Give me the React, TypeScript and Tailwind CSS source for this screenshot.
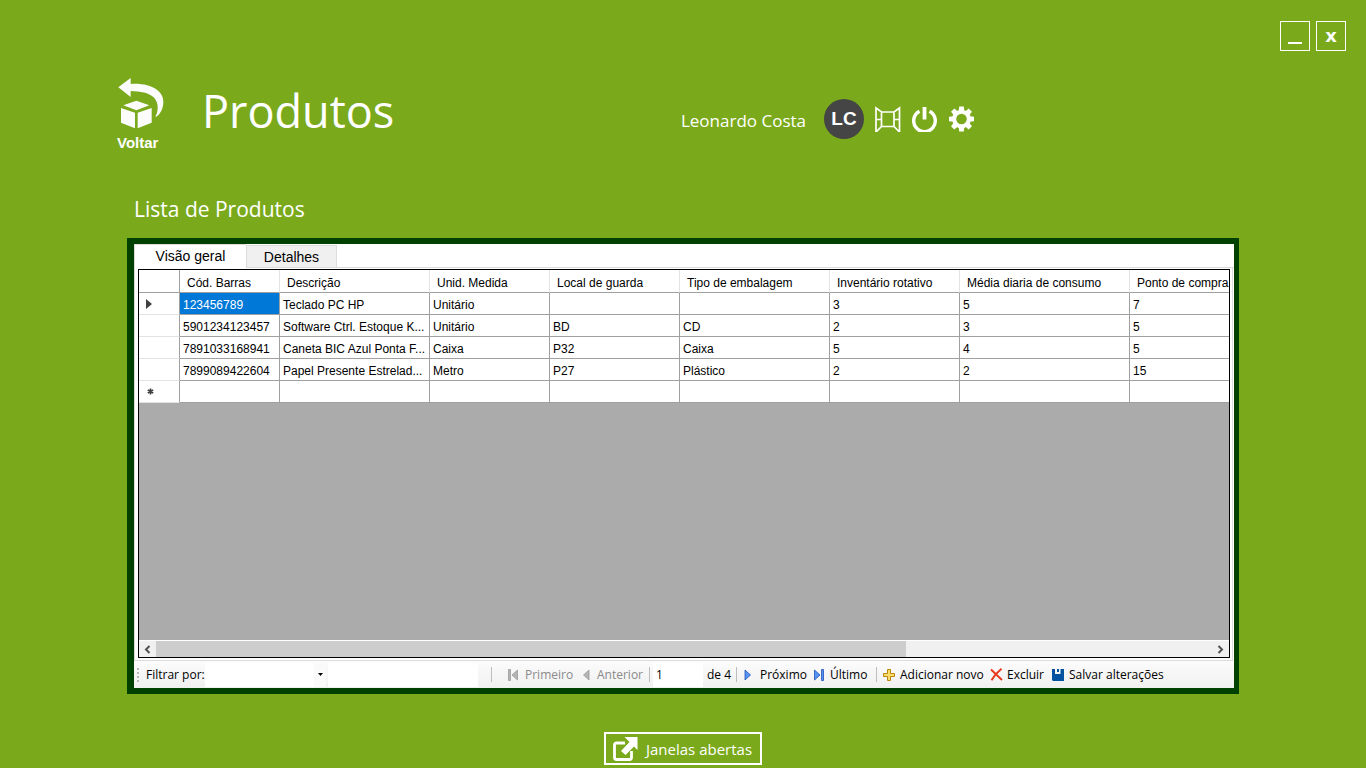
import React from "react";

const segoe = "font-['Open_Sans','Noto_Sans',sans-serif]";
const sans = "font-['Liberation_Sans',Arial,sans-serif]";

const columns = [
  { title: "Cód. Barras", width: "w-[100px]" },
  { title: "Descrição", width: "w-[150px]" },
  { title: "Unid. Medida", width: "w-[120px]" },
  { title: "Local de guarda", width: "w-[130px]" },
  { title: "Tipo de embalagem", width: "w-[150px]" },
  { title: "Inventário rotativo", width: "w-[130px]" },
  { title: "Média diaria de consumo", width: "w-[170px]" },
  { title: "Ponto de compra", width: "w-[130px]" },
];

const rows = [
  ["123456789", "Teclado PC HP", "Unitário", "", "", "3", "5", "7"],
  ["5901234123457", "Software Ctrl. Estoque K...", "Unitário", "BD", "CD", "2", "3", "5"],
  ["7891033168941", "Caneta BIC Azul Ponta F...", "Caixa", "P32", "Caixa", "5", "4", "5"],
  ["7899089422604", "Papel Presente Estrelad...", "Metro", "P27", "Plástico", "2", "2", "15"],
  ["", "", "", "", "", "", "", ""],
];

function BackIcon() {
  return (
    <svg viewBox="51 36 144 156" className="h-[52px] w-12 fill-[#fcfcfc]" aria-hidden="true">
      <path d="M55 67 92 39V57C155 53 192 80 190 112C189 136 178 150 168 156C165 154 168 152 170 147C176 128 174 111 161 97C146 83 122 79 92 78V96Z" />
      <path d="M109 107 148 121 109 136 70 121Z" />
      <path d="M63 129 105 143V190L63 173Z" />
      <path d="M155 129 113 143V190L155 173Z" />
    </svg>
  );
}

function WindowIcon() {
  return (
    <svg viewBox="0 0 26 26" className="size-[26px] fill-none stroke-white" strokeWidth="1.7" aria-hidden="true">
      <path d="M1 2V26L6.500 20.500H19L24.500 26V2L19 6H6.500ZM6.500 6V20.500M19 6V20.500M1 13.500H6.500M19 13.500H24.500" />
    </svg>
  );
}

function PowerIcon() {
  return (
    <svg viewBox="0 0 26 26" className="size-[26px] fill-none stroke-white" strokeWidth="3.4" aria-hidden="true">
      <path d="M7.500 5.300A10.800 10.800 0 1 0 17.500 5.300" />
      <path d="M12.500 1V13.500" strokeWidth="3.800" />
    </svg>
  );
}

function GearIcon() {
  return (
    <svg viewBox="0 0 26 26" className="size-[26px]" aria-hidden="true">
      <circle cx="12.500" cy="13" r="7.300" fill="none" stroke="#fff" strokeWidth="4" />
      <g className="fill-white">
        {[0, 45, 90, 135, 180, 225, 270, 315].map((a) => (
          <path key={a} d="M9.700 5.500 10.200 .5H14.800L15.300 5.500Z" transform={`rotate(${a} 12.5 13)`} />
        ))}
      </g>
    </svg>
  );
}

function OpenIcon() {
  return (
    <svg viewBox="0 0 26 26" className="size-[26px] shrink-0" aria-hidden="true">
      <path d="M13 7H4.500Q2.500 7 2.500 9V21.500Q2.500 23.500 4.500 23.500H17.500Q19.500 23.500 19.500 21.500V15" fill="none" stroke="#fff" strokeWidth="2.800" />
      <path d="M12.500 1H25.500V14L22 10.500 13.500 19 9 15 17.500 6Z" className="fill-white" />
    </svg>
  );
}

function NavIcon({ back, bar, off }: { back?: boolean; bar?: boolean; off?: boolean }) {
  return (
    <svg viewBox="0 0 12 12" className="size-3 shrink-0" aria-hidden="true">
      <g
        transform={back ? "translate(12 0) scale(-1 1)" : undefined}
        className={off ? "fill-[#b4b4b4] stroke-[#9a9a9a]" : "fill-[#5794f2] stroke-[#1f50b8]"}
        strokeWidth="0.8"
      >
        <path d={bar ? "M1.5 1V11L7 6Z" : "M3 1V11L8.500 6Z"} />
        {bar && <path d="M8.500 0.500H10.500V11.500H8.500Z" />}
      </g>
    </svg>
  );
}

function PlusIcon() {
  return (
    <svg viewBox="0 0 12 12" className="size-3 shrink-0" aria-hidden="true">
      <path d="M4.500 .5H7.500V4.500H11.500V7.500H7.500V11.500H4.500V7.500H.5V4.500H4.500Z" fill="#fbdc6b" stroke="#b8860b" />
    </svg>
  );
}

function DeleteIcon() {
  return (
    <svg viewBox="0 0 13 13" className="size-[13px] shrink-0" aria-hidden="true">
      <path d="M1 1.500 12 12M11.500 .7Q5 6 1.500 12.300" fill="none" stroke="#e8391d" strokeWidth="1.900" />
    </svg>
  );
}

function SaveIcon() {
  return (
    <svg viewBox="0 0 12 12" className="size-3 shrink-0" aria-hidden="true">
      <path d="M0 0H3V5H10V0H12V12H1L0 11Z" fill="#0552a0" />
      <path d="M5 0H7V3H5Z" fill="#0552a0" />
      <path d="M8.500 0H10V5H8.500Z" fill="#0552a0" />
    </svg>
  );
}

function Separator() {
  return <span className="h-[15px] w-px shrink-0 bg-[#bdbdbd]" />;
}

function ToolButton({
  icon, label, width, gap = "gap-[5px]", off,
}: { icon: React.ReactNode; label: string; width: string; gap?: string; off?: boolean }) {
  return (
    <button
      type="button"
      disabled={off}
      className={`flex h-full shrink-0 items-center whitespace-nowrap ${gap} ${width} ${off ? "text-[#8a8a8a]" : ""}`}
    >
      {icon}
      {label}
    </button>
  );
}

function ProductGrid() {
  return (
    <div className="flex min-h-0 flex-1 flex-col border border-black bg-[#ababab]">
      <div className="min-h-0 flex-1 overflow-hidden">
        <table className="w-max table-fixed border-separate border-spacing-0 text-[12px] leading-4 text-black">
          <thead>
            <tr className="h-[23px] bg-white">
              <th className="w-[41px] border-r border-b border-[#a0a0a0] p-0" aria-label="Linha" />
              {columns.map((c) => (
                <th
                  key={c.title}
                  className={`${c.width} border-r border-b border-r-[#e3e3e3] border-b-[#a0a0a0] pt-1 pr-0 pb-0 pl-[7px] text-left font-normal whitespace-nowrap`}
                >
                  {c.title}
                </th>
              ))}
            </tr>
          </thead>
          <tbody>
            {rows.map((row, r) => (
              <tr key={r} className="h-[22px] bg-white">
                <th className="border-r border-b border-r-[#a0a0a0] border-b-[#e3e3e3] p-0">
                  {r === 0 && (
                    <svg viewBox="0 0 6 10" className="ml-[7px] h-[10px] w-[6px]" aria-hidden="true">
                      <path d="M0 0V10L6 5Z" fill="#404040" />
                    </svg>
                  )}
                  {r === 4 && (
                    <svg viewBox="0 0 7 7" className="ml-2 size-[7px]" aria-hidden="true">
                      <path d="M3.500 .5V6.500M.8 2 6.200 5M6.200 2 .8 5" stroke="#404040" strokeWidth="1.700" />
                    </svg>
                  )}
                </th>
                {row.map((value, c) => (
                  <td
                    key={c}
                    className={`overflow-hidden border-r border-b border-[#a0a0a0] pt-[2px] pr-0 pb-0 pl-[3px] whitespace-nowrap ${r === 0 && c === 0 ? "bg-[#0078d7] text-white" : ""}`}
                  >
                    {value}
                  </td>
                ))}
              </tr>
            ))}
          </tbody>
        </table>
      </div>
      <div className="flex h-[17px] shrink-0 border-t border-white bg-[#f0f0f0]">
        <button type="button" aria-label="Rolar para a esquerda" className="flex w-[17px] items-center justify-center">
          <svg viewBox="0 0 7 9" className="h-[9px] w-[7px] fill-none stroke-[#505050] stroke-2"><path d="M5.500 1 2 4.500 5.500 8" /></svg>
        </button>
        <div className="flex-1"><div className="h-full w-[71%] bg-[#cdcdcd]" /></div>
        <button type="button" aria-label="Rolar para a direita" className="flex w-[17px] items-center justify-center">
          <svg viewBox="0 0 7 9" className="h-[9px] w-[7px] fill-none stroke-[#505050] stroke-2"><path d="M1.500 1 5 4.500 1.500 8" /></svg>
        </button>
      </div>
    </div>
  );
}

function Toolbar() {
  return (
    <div className={`flex h-[27px] shrink-0 items-center overflow-hidden bg-linear-to-b from-[#fcfcfc] to-[#f0f0f0] text-[12px] leading-4 text-black ${segoe}`}>
      <span className="ml-[3px] flex w-[9px] shrink-0 flex-col gap-[2px]">
        {[0, 1, 2, 3].map((i) => <i key={i} className="size-[2px] bg-[#b8b8b8]" />)}
      </span>
      <label htmlFor="filter" className="w-[59px] shrink-0 whitespace-nowrap">Filtrar por:</label>
      <div className="relative mr-[2px] h-6 w-[121px] shrink-0">
        <select id="filter" className="size-full appearance-none bg-white"><option value="" /></select>
        <span className="pointer-events-none absolute inset-y-0 right-0 flex w-3 items-center justify-center bg-[#fafafa]">
          <svg viewBox="0 0 5 3" className="h-[3px] w-[5px]"><path d="M0 0H5L2.500 3Z" /></svg>
        </span>
      </div>
      <input aria-label="Texto do filtro" className="mr-[13px] h-6 w-[150px] shrink-0 bg-white" />
      <Separator />
      <span className="w-[15px] shrink-0" />
      <ToolButton icon={<NavIcon back bar off />} label="Primeiro" width="w-[73px]" gap="gap-[6px]" off />
      <ToolButton icon={<NavIcon back off />} label="Anterior" width="w-[69px]" off />
      <Separator />
      <input aria-label="Posição atual" defaultValue="1" className="ml-[3px] h-6 w-[50px] shrink-0 bg-white pl-[3px]" />
      <span className="w-[33px] shrink-0 pl-1">de 4</span>
      <Separator />
      <span className="w-[5px] shrink-0" />
      <ToolButton icon={<NavIcon />} label="Próximo" width="w-[71px]" gap="gap-[6px]" />
      <ToolButton icon={<NavIcon bar />} label="Último" width="w-[63px]" />
      <Separator />
      <span className="w-[6px] shrink-0" />
      <ToolButton icon={<PlusIcon />} label="Adicionar novo" width="w-[107px]" />
      <ToolButton icon={<DeleteIcon />} label="Excluir" width="w-[62px]" gap="gap-1" />
      <ToolButton icon={<SaveIcon />} label="Salvar alterações" width="w-[110px]" />
    </div>
  );
}

export default function App() {
  return (
    <div className={`flex min-h-screen flex-col bg-[#7aaa1c] pt-[21px] pb-[3px] text-white ${sans}`}>
      <div className="mr-5 flex justify-end gap-[6px]">
        <button type="button" aria-label="Minimizar" className="flex size-[30px] items-end justify-center border border-white pb-[6px]">
          <span className="h-[2px] w-[14px] bg-white" />
        </button>
        <button type="button" aria-label="Fechar" className="size-[30px] border border-white font-['DejaVu_Sans',sans-serif] text-[18px] leading-6 font-bold">x</button>
      </div>

      <header className="mt-[26px] ml-[117px] flex max-w-[858px] items-start justify-between">
        <div className="flex items-start">
          <button type="button" className="flex w-[85px] flex-col items-start text-[15px] leading-4 font-bold">
            <BackIcon />
            <span className="mt-[6px]">Voltar</span>
          </button>
          <h1 className={`text-[45px] leading-[68px] font-normal ${segoe}`}>Produtos</h1>
        </div>
        <div className="mt-[22px] flex items-center">
          <span className={`mr-[18px] pt-[3px] text-[17px] leading-6 ${segoe}`}>Leonardo Costa</span>
          <span className="mr-[11px] flex size-10 items-center justify-center rounded-full bg-[#454545] text-[19px] font-bold">LC</span>
          <div className="flex gap-[11px]">
            <button type="button" aria-label="Janela"><WindowIcon /></button>
            <button type="button" aria-label="Sair"><PowerIcon /></button>
            <button type="button" aria-label="Configurações"><GearIcon /></button>
          </div>
        </div>
      </header>

      <main className="mx-[127px] mt-[42px] flex min-h-0 flex-1 flex-col">
        <h2 className={`ml-[7px] text-[21px] leading-8 font-normal ${segoe}`}>Lista de Produtos</h2>
        <section className="mt-[13px] flex flex-1 flex-col border-t-6 border-r-5 border-b-6 border-l-7 border-[#004000] bg-white text-black">
          <div role="tablist" className="flex h-6 shrink-0 items-end border-b border-[#dcdcdc] text-[14px] leading-4">
            <button type="button" role="tab" aria-selected="true" className="-mb-px h-6 w-28 border-t border-l border-[#dcdcdc] bg-white pb-[2px]">Visão geral</button>
            <button type="button" role="tab" aria-selected="false" className="h-[22px] w-[91px] border border-b-0 border-[#dcdcdc] bg-[#f0f0f0]">Detalhes</button>
          </div>
          <div className="mr-px flex min-h-0 flex-1 flex-col border-r border-b border-l border-[#dcdcdc] pt-px pr-[2px] pb-[2px] pl-[3px]">
            <ProductGrid />
          </div>
          <Toolbar />
        </section>
      </main>

      <footer className="mt-[38px] flex justify-center">
        <button type="button" className={`flex h-[33px] w-[158px] items-center gap-2 border-2 border-white pl-[6px] text-[15px] leading-5 whitespace-nowrap ${segoe}`}>
          <OpenIcon />
          Janelas abertas
        </button>
      </footer>
    </div>
  );
}
